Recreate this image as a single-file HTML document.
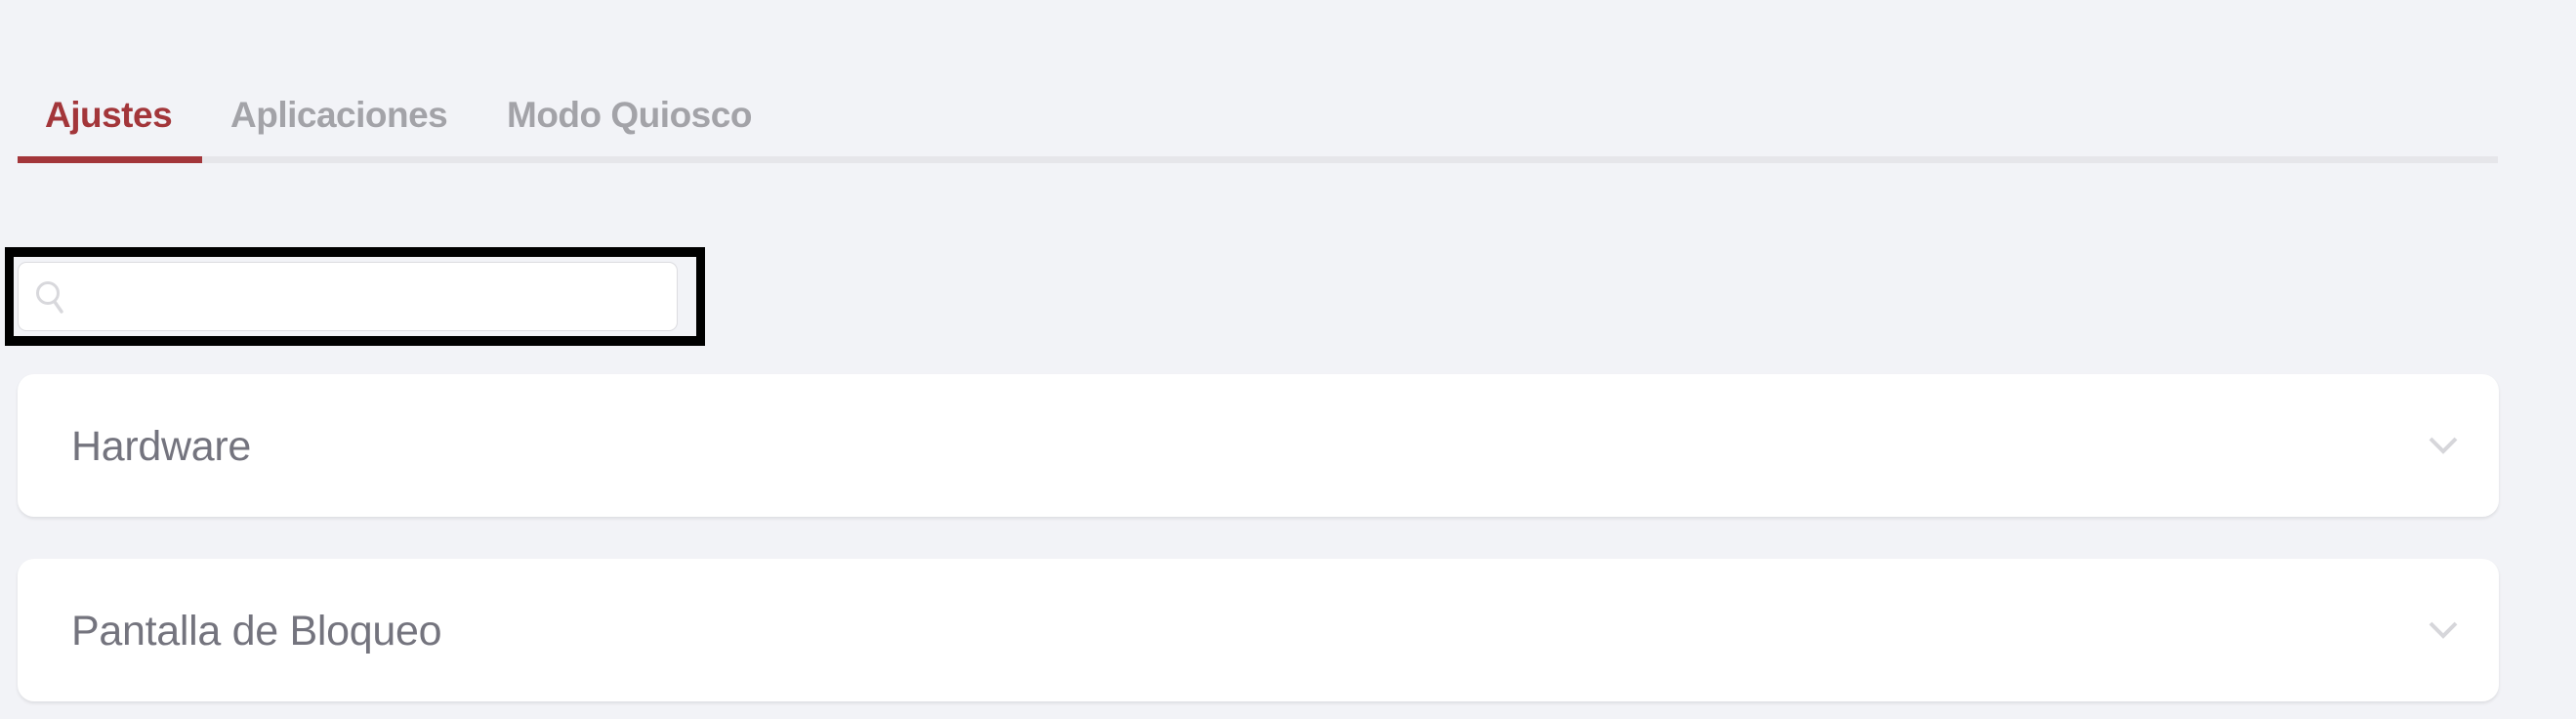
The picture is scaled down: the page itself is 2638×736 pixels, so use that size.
<!DOCTYPE html>
<html><head><meta charset="utf-8"><style>
body{margin:0;width:2638px;height:736px;background:#f2f3f7;font-family:"Liberation Sans",sans-serif;position:relative;overflow:hidden}
.tab{position:absolute;top:97px;font-size:37px;font-weight:bold;color:#a3a3a8;letter-spacing:-0.5px;white-space:nowrap}
.line{position:absolute;left:18px;top:160px;width:2540px;height:7px;background:#e6e6ea}
.red{position:absolute;left:18px;top:160px;width:189px;height:7px;background:#a3363a}
.frame{position:absolute;left:5px;top:253px;width:717px;height:101px;box-sizing:border-box;border:10px solid #000;border-left-width:9px;border-right-width:9px}
.input{position:absolute;left:18px;top:268px;width:676px;height:71px;box-sizing:border-box;background:#fff;border:1.5px solid #dcdce0;border-radius:9px}
.card{position:absolute;left:18px;width:2541px;height:146px;background:#fff;border-radius:17px;box-shadow:0 2px 3px rgba(0,0,0,0.09)}
.card span{position:absolute;left:55px;top:50px;font-size:43px;color:#74747e;letter-spacing:-0.3px}
.card svg{position:absolute;left:2469px;top:64px}
</style></head><body>
<div class="tab" style="left:46px;color:#a3363a">Ajustes</div>
<div class="tab" style="left:236px">Aplicaciones</div>
<div class="tab" style="left:519px">Modo Quiosco</div>
<div class="line"></div><div class="red"></div>
<div class="frame"></div>
<div class="input"><svg width="36" height="36" style="position:absolute;left:17px;top:18px"><circle cx="13" cy="13" r="10.5" fill="none" stroke="#d8d8dc" stroke-width="3"/><path d="M20 22 L27 32" stroke="#d8d8dc" stroke-width="3.5" stroke-linecap="round"/></svg></div>
<div class="card" style="top:383px"><span>Hardware</span><svg width="30" height="20"><path d="M2 2 L15 15 L28 2" fill="none" stroke="#d6d6da" stroke-width="4"/></svg></div>
<div class="card" style="top:572px"><span>Pantalla de Bloqueo</span><svg width="30" height="20"><path d="M2 2 L15 15 L28 2" fill="none" stroke="#d6d6da" stroke-width="4"/></svg></div>
</body></html>
